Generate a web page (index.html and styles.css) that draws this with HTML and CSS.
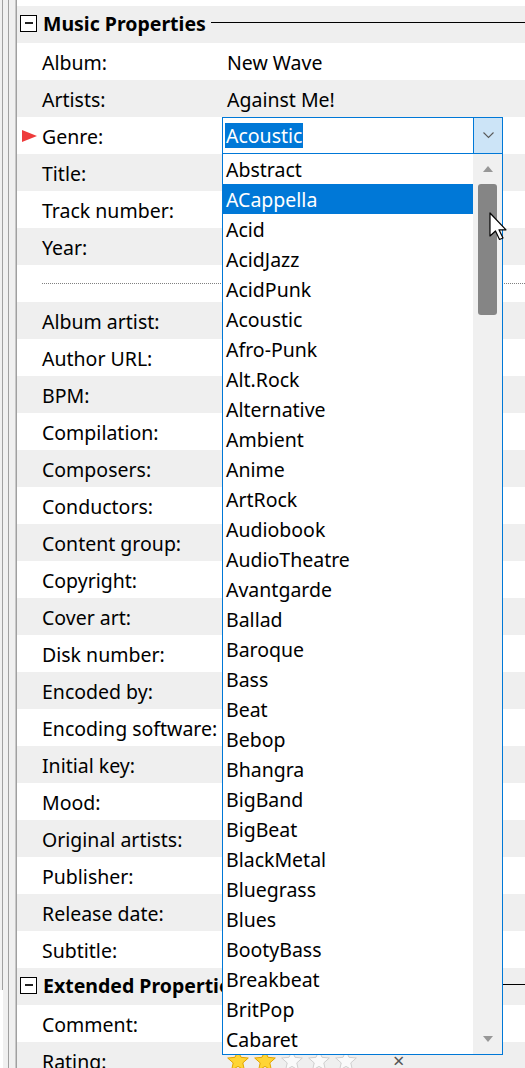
FILE: index.html
```html
<!DOCTYPE html>
<html>

<head>
    <meta charset="utf-8" />
    <title>Properties</title>
    <link rel="stylesheet" href="styles.css">
</head>

<body>
    <div class="grid">
        <div class="gutter">
            <span class="frame"></span>
            <span class="bar"></span>
        </div>
        <div class="sheet">
            <div class="top-cut"></div>
            <div class="cat">
                <span class="toggle"></span>
                <span class="cat-name">Music Properties</span>
                <span class="cat-line"></span>
            </div>
            <div class="prop"><span class="mark"></span><span class="name">Album:</span><span class="value">New Wave</span></div>
            <div class="prop"><span class="mark"></span><span class="name">Artists:</span><span class="value">Against Me!</span></div>
            <div class="prop">
                <span class="mark"><span class="arrow"></span></span>
                <span class="name">Genre:</span>
                <span class="value edit">
                    <span class="combo">
                        <span class="combo-text"><span class="sel">Acoustic</span></span>
                        <span class="combo-btn">
                            <svg width="11" height="7" viewBox="0 0 11 7"><path d="M0.5 0.5 L5.5 5.5 L10.5 0.5" fill="none" stroke="#5a5a5a" stroke-width="1.1" /></svg>
                        </span>
                    </span>
                    <span class="drop">
                        <span class="items">
                            <span class="item">Abstract</span>
                            <span class="item hot">ACappella</span>
                            <span class="item">Acid</span>
                            <span class="item">AcidJazz</span>
                            <span class="item">AcidPunk</span>
                            <span class="item">Acoustic</span>
                            <span class="item">Afro-Punk</span>
                            <span class="item">Alt.Rock</span>
                            <span class="item">Alternative</span>
                            <span class="item">Ambient</span>
                            <span class="item">Anime</span>
                            <span class="item">ArtRock</span>
                            <span class="item">Audiobook</span>
                            <span class="item">AudioTheatre</span>
                            <span class="item">Avantgarde</span>
                            <span class="item">Ballad</span>
                            <span class="item">Baroque</span>
                            <span class="item">Bass</span>
                            <span class="item">Beat</span>
                            <span class="item">Bebop</span>
                            <span class="item">Bhangra</span>
                            <span class="item">BigBand</span>
                            <span class="item">BigBeat</span>
                            <span class="item">BlackMetal</span>
                            <span class="item">Bluegrass</span>
                            <span class="item">Blues</span>
                            <span class="item">BootyBass</span>
                            <span class="item">Breakbeat</span>
                            <span class="item">BritPop</span>
                            <span class="item">Cabaret</span>
                        </span>
                        <span class="scroll">
                            <span class="step"><span class="tri up"></span></span>
                            <span class="thumb"></span>
                            <span class="track"></span>
                            <span class="step"><span class="tri down"></span></span>
                        </span>
                    </span>
                </span>
            </div>
            <div class="prop"><span class="mark"></span><span class="name">Title:</span><span class="value"></span></div>
            <div class="prop"><span class="mark"></span><span class="name">Track number:</span><span class="value"></span></div>
            <div class="prop"><span class="mark"></span><span class="name">Year:</span><span class="value"></span></div>
            <div class="sep"><span class="dots"></span></div>
            <div class="prop"><span class="mark"></span><span class="name">Album artist:</span><span class="value"></span></div>
            <div class="prop"><span class="mark"></span><span class="name">Author URL:</span><span class="value"></span></div>
            <div class="prop"><span class="mark"></span><span class="name">BPM:</span><span class="value"></span></div>
            <div class="prop"><span class="mark"></span><span class="name">Compilation:</span><span class="value"></span></div>
            <div class="prop"><span class="mark"></span><span class="name">Composers:</span><span class="value"></span></div>
            <div class="prop"><span class="mark"></span><span class="name">Conductors:</span><span class="value"></span></div>
            <div class="prop"><span class="mark"></span><span class="name">Content group:</span><span class="value"></span></div>
            <div class="prop"><span class="mark"></span><span class="name">Copyright:</span><span class="value"></span></div>
            <div class="prop"><span class="mark"></span><span class="name">Cover art:</span><span class="value"></span></div>
            <div class="prop"><span class="mark"></span><span class="name">Disk number:</span><span class="value"></span></div>
            <div class="prop"><span class="mark"></span><span class="name">Encoded by:</span><span class="value"></span></div>
            <div class="prop"><span class="mark"></span><span class="name">Encoding software:</span><span class="value"></span></div>
            <div class="prop"><span class="mark"></span><span class="name">Initial key:</span><span class="value"></span></div>
            <div class="prop"><span class="mark"></span><span class="name">Mood:</span><span class="value"></span></div>
            <div class="prop"><span class="mark"></span><span class="name">Original artists:</span><span class="value"></span></div>
            <div class="prop"><span class="mark"></span><span class="name">Publisher:</span><span class="value"></span></div>
            <div class="prop"><span class="mark"></span><span class="name">Release date:</span><span class="value"></span></div>
            <div class="prop"><span class="mark"></span><span class="name">Subtitle:</span><span class="value"></span></div>
            <div class="cat">
                <span class="toggle"></span>
                <span class="cat-name">Extended Properties</span>
                <span class="cat-line"></span>
            </div>
            <div class="prop"><span class="mark"></span><span class="name">Comment:</span><span class="value"></span></div>
            <div class="prop">
                <span class="mark"></span>
                <span class="name">Rating:</span>
                <span class="value stars">
                    <svg class="star" viewBox="0 0 24 24"><path d="M12 1.5l3 6.8 7.3.7-5.5 4.9 1.6 7.2L12 17.4l-6.4 3.7 1.6-7.2L1.7 9l7.3-.7z" fill="#ffd535" stroke="#e3a400" /></svg>
                    <svg class="star" viewBox="0 0 24 24"><path d="M12 1.5l3 6.8 7.3.7-5.5 4.9 1.6 7.2L12 17.4l-6.4 3.7 1.6-7.2L1.7 9l7.3-.7z" fill="#ffd535" stroke="#e3a400" /></svg>
                    <svg class="star" viewBox="0 0 24 24"><path d="M12 1.5l3 6.8 7.3.7-5.5 4.9 1.6 7.2L12 17.4l-6.4 3.7 1.6-7.2L1.7 9l7.3-.7z" fill="#fafafa" stroke="#cfcfcf" /></svg>
                    <svg class="star" viewBox="0 0 24 24"><path d="M12 1.5l3 6.8 7.3.7-5.5 4.9 1.6 7.2L12 17.4l-6.4 3.7 1.6-7.2L1.7 9l7.3-.7z" fill="#fafafa" stroke="#cfcfcf" /></svg>
                    <svg class="star" viewBox="0 0 24 24"><path d="M12 1.5l3 6.8 7.3.7-5.5 4.9 1.6 7.2L12 17.4l-6.4 3.7 1.6-7.2L1.7 9l7.3-.7z" fill="#fafafa" stroke="#cfcfcf" /></svg>
                    <span class="clear">×</span>
                </span>
            </div>
        </div>
    </div>
    <svg class="pointer" width="19" height="29" viewBox="0 0 19 29">
        <path d="M1 1 V24 L6.5 19 L10.5 27.5 L14 26 L10 17.8 H17 Z" fill="#fff" stroke="#000" stroke-width="1.2" stroke-linejoin="round" />
    </svg>
</body>

</html>
```

FILE: styles.css
```css
html,
body {
    margin: 0;
    height: 100%;
    overflow: hidden;
    background: #fff;
}

body {
    font-family: "Noto Sans", "Open Sans", sans-serif;
    font-size: 19.5px;
    color: #000;
    position: relative;
}

.grid {
    display: flex;
    height: 1068px;
}

.gutter {
    width: 17px;
    display: flex;
    flex: none;
}

.frame {
    width: 3px;
    height: 990px;
    background: linear-gradient(to right, #f0f0f0 2px, #a0a0a0 2px);
}

.bar {
    width: 14px;
    background: linear-gradient(to right, #f0f0f0 5px, #a0a0a0 5px 6px, #f0f0f0 6px 12px, #c8c8c8 12px 13px, #a0a0a0 13px);
}

.sheet {
    flex: 1;
    display: flex;
    flex-direction: column;
}

.sheet > :nth-child(even) {
    background: #efefef;
}

.top-cut {
    height: 6px;
    flex: none;
}

.cat {
    height: 37px;
    flex: none;
    display: flex;
    align-items: center;
    font-weight: bold;
}

.toggle {
    width: 17px;
    height: 17px;
    box-sizing: border-box;
    border: 1px solid #000;
    background: #fff;
    margin-left: 3px;
    margin-top: -3px;
    display: flex;
    align-items: center;
    justify-content: center;
}

.toggle::before {
    content: "";
    width: 8px;
    height: 2px;
    background: #222;
}

.cat-name {
    margin-left: 6px;
    white-space: nowrap;
    line-height: 37px;
    margin-top: -3px;
}

.cat-line {
    flex: 1;
    height: 1px;
    background: #000;
    margin-left: 5px;
    margin-top: -5px;
}

.prop {
    height: 37px;
    flex: none;
    display: grid;
    grid-template-columns: 25px 180px 1fr;
    align-items: center;
}

.mark {
    display: flex;
    align-items: center;
}

.arrow {
    margin-left: 5px;
    width: 0;
    height: 0;
    border-top: 6px solid transparent;
    border-bottom: 6px solid transparent;
    border-left: 15px solid #ee3b3b;
}

.name,
.value {
    white-space: nowrap;
    line-height: 35px;
    padding-top: 2px;
}

.value {
    padding-left: 5px;
}

.edit {
    padding: 0;
    position: relative;
    height: 37px;
}

.combo {
    display: flex;
    width: 281px;
    height: 37px;
    box-sizing: border-box;
    border: 1px solid #0078d7;
    background: #fff;
}

.combo-text {
    flex: 1;
    display: flex;
    align-items: center;
    padding-left: 2px;
}

.sel {
    background: #0078d7;
    color: #fff;
    line-height: 25px;
    padding: 0 1px;
    margin-top: -1px;
}

.combo-btn {
    width: 28px;
    border-left: 1px solid #0078d7;
    background: #cce4f7;
    display: flex;
    align-items: center;
    justify-content: center;
}

.drop {
    position: absolute;
    left: 0;
    top: 36px;
    width: 281px;
    height: 902px;
    box-sizing: border-box;
    border: 1px solid #0078d7;
    background: #fff;
    display: flex;
    z-index: 2;
}

.items {
    flex: 1;
    display: flex;
    flex-direction: column;
}

.item {
    height: 30px;
    box-sizing: border-box;
    line-height: 28px;
    padding: 2px 0 0 3px;
}

.item.hot {
    background: #0078d7;
    color: #fff;
}

.scroll {
    width: 29px;
    background: #f0f0f0;
    display: flex;
    flex-direction: column;
}

.step {
    height: 30px;
    display: flex;
    align-items: center;
    justify-content: center;
}

.tri {
    width: 0;
    height: 0;
    border-left: 5px solid transparent;
    border-right: 5px solid transparent;
}

.tri.up {
    border-bottom: 6px solid #979797;
}

.tri.down {
    border-top: 6px solid #979797;
}

.thumb {
    height: 131px;
    width: 19px;
    margin-left: 5px;
    background: #858585;
    border-radius: 3px;
}

.track {
    flex: 1;
}

.stars {
    display: flex;
    align-items: center;
    gap: 3px;
    padding: 0 0 0 4px;
    height: 37px;
}

.star {
    width: 24px;
    height: 24px;
}

.clear {
    margin-left: 32px;
    color: #555;
    font-size: 20px;
}

.sep {
    height: 37px;
    flex: none;
    display: flex;
    align-items: center;
}

.dots {
    flex: 1;
    margin-left: 25px;
    border-top: 1px dotted #808080;
}

.pointer {
    position: absolute;
    left: 489px;
    top: 212px;
    z-index: 3;
}
```
